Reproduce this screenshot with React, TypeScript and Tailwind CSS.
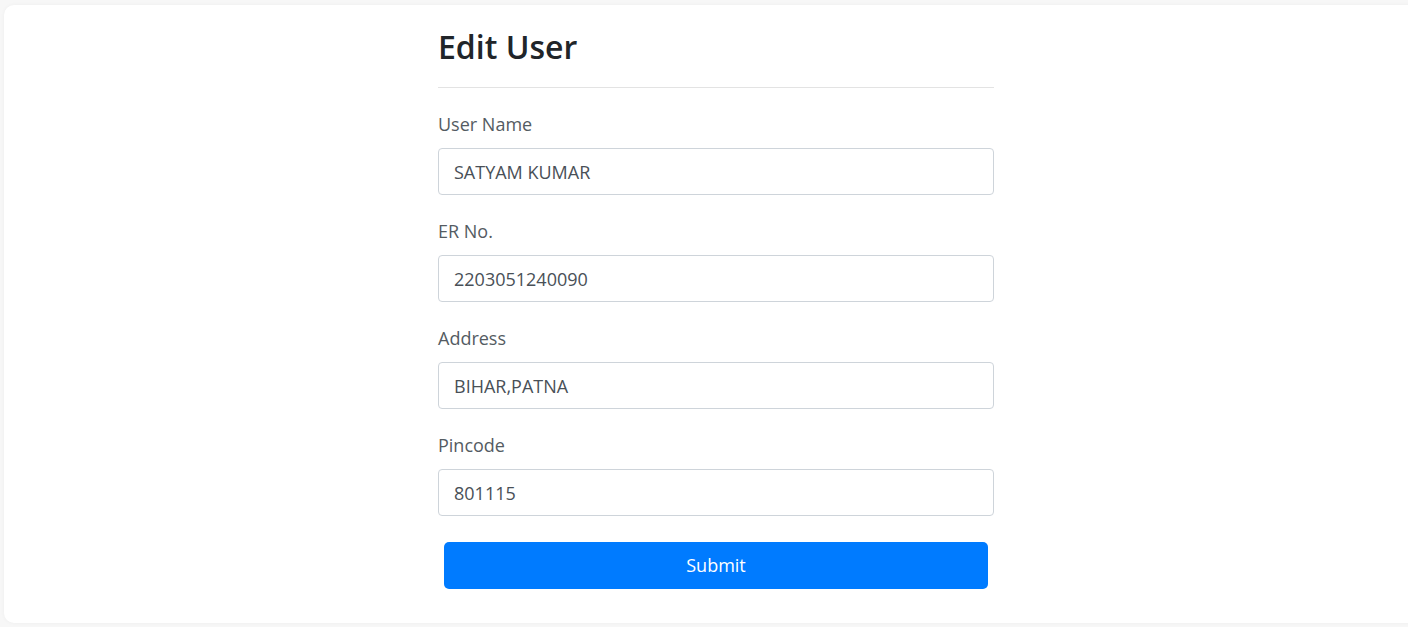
const fields = [
  { label: "User Name", value: "SATYAM KUMAR" },
  { label: "ER No.", value: "2203051240090" },
  { label: "Address", value: "BIHAR,PATNA" },
  { label: "Pincode", value: "801115" },
]

export default function App() {
  return (
    <div
      className="h-[627px] w-[1408px] overflow-hidden bg-[#f7f7f7] pt-[5px] pl-1"
      style={{ fontFamily: '"Open Sans", "Noto Sans", sans-serif' }}
    >
      <div className="h-[618px] w-[1424px] rounded-[10px] bg-white shadow-[0_0_4px_rgba(0,0,0,0.04)]">
        <div className="mx-auto w-[556px] pt-[23px]">
          <h2 className="text-[32px] font-semibold leading-[38px] text-[#212529]">Edit User</h2>
          <hr className="mt-[21px] mb-[23px] border-t border-[#e3e3e3]" />
          <form className="flex flex-col">
            {fields.map((f) => (
              <div key={f.label} className="mb-[23px] flex flex-col">
                <label className="mb-[10px] text-[18px] leading-[27px] text-[#545b62]">{f.label}</label>
                <input
                  defaultValue={f.value}
                  className="h-[47px] rounded-[4px] border border-[#ced4da] bg-white px-[15px] text-[18px] text-[#495057] outline-none"
                />
              </div>
            ))}
            <button
              type="button"
              className="mx-[6px] mt-[3px] h-[47px] rounded-[5px] bg-[#007bff] text-[18px] font-medium text-white"
            >
              Submit
            </button>
          </form>
        </div>
      </div>
    </div>
  )
}
